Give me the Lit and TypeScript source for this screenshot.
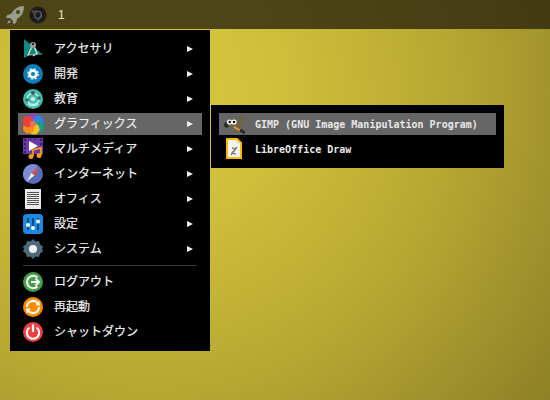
import { LitElement, html, css, svg } from "lit";
import { customElement } from "lit/decorators.js";

const icons: Record<string, unknown> = {
  acc: svg`<path d="M2 1 L12 9 L21 17 L9 16.500 L2 20 Z" fill="#0e8a7e"/><circle cx="11" cy="7" r="3" fill="#9a9a9a"/><rect x="10" y="5" width="2" height="2" fill="#222"/><path d="M9.500 9.500 L6 17 M12.500 9.500 L15 15.500 L11 18" stroke="#e2e2e2" stroke-width="1.300" fill="none"/><path d="M5 17 L15 16.500" stroke="#bbb" stroke-width="1"/>`,
  dev: svg`<circle cx="11" cy="11" r="10" fill="#0a7fb8"/><circle cx="11" cy="11" r="3.400" fill="none" stroke="#fff" stroke-width="2.600"/><circle cx="11" cy="11" r="5.200" fill="none" stroke="#fff" stroke-width="1.300" stroke-dasharray="2 2.100"/>`,
  edu: svg`<circle cx="11" cy="11" r="10" fill="#3dbfae"/><ellipse cx="11" cy="11" rx="6" ry="5.500" fill="none" stroke="#dff3f0" stroke-width="1.300"/><circle cx="11" cy="5" r="2" fill="#4a5a5a"/><circle cx="17" cy="10" r="1.700" fill="#4a5a5a"/><circle cx="5" cy="12" r="1.700" fill="#4a5a5a"/><circle cx="11" cy="11" r="2.300" fill="#bfe9e2"/><path d="M6 16 Q11 20 16 16" fill="none" stroke="#dff3f0" stroke-width="1.200"/>`,
  gfx: svg`<circle cx="11" cy="6.500" r="6" fill="#8e44c9"/><circle cx="16" cy="8" r="5.500" fill="#2f86e0"/><circle cx="16.500" cy="14" r="5.500" fill="#12a08a"/><circle cx="12" cy="16" r="5.500" fill="#f2c21e"/><circle cx="6.500" cy="15" r="5.500" fill="#f58a1f"/><circle cx="6" cy="8.500" r="5.500" fill="#ee4136"/><circle cx="11" cy="11" r="3" fill="#f07060"/>`,
  mm: svg`<rect x="1" y="0" width="20" height="16" fill="#6a3aa8"/><g fill="#3a1a70"><rect x="2" y="1" width="2" height="2"/><rect x="2" y="5" width="2" height="2"/><rect x="2" y="9" width="2" height="2"/><rect x="2" y="13" width="2" height="2"/><rect x="18" y="1" width="2" height="2"/><rect x="18" y="5" width="2" height="2"/><rect x="7" y="1" width="2" height="1"/><rect x="12" y="1" width="2" height="1"/></g><path d="M7 3 L16 8 L7 13Z" fill="#fff"/><path d="M11 18 V12 L19 10 V17" fill="none" stroke="#f59a14" stroke-width="1.800"/><circle cx="9" cy="18.500" r="2.500" fill="#f59a14"/><circle cx="17" cy="17.500" r="2.500" fill="#f59a14"/>`,
  net: svg`<circle cx="11" cy="11" r="10" fill="#5a6cb8"/><path d="M1 11A10 10 0 0 1 16 2.500 L6 19.500 A10 10 0 0 1 1 11Z" fill="#7d8ed0"/><path d="M17 4 L12.500 12.500 L9.500 10Z" fill="#e94b35"/><path d="M5 18 L9.500 10 L12.500 12.500Z" fill="#eee"/>`,
  off: svg`<rect x="3" y="1" width="16" height="20" fill="#eaeaea"/><g fill="#555"><rect x="5" y="4" width="12" height="1"/><rect x="5" y="6" width="12" height="1"/><rect x="5" y="8" width="12" height="1"/><rect x="5" y="10" width="12" height="1"/><rect x="5" y="12" width="12" height="1"/><rect x="5" y="14" width="12" height="1"/><rect x="5" y="16" width="12" height="1"/></g>`,
  set: svg`<rect x="1" y="1" width="20" height="20" rx="4" fill="#1e88e5"/><path d="M6 5V17M11 5V17M16 5V17" stroke="#0b3f70" stroke-width="1.600"/><circle cx="6" cy="12" r="2" fill="#fff"/><circle cx="11" cy="15" r="2" fill="#fff"/><circle cx="16" cy="8.500" r="2" fill="#fff"/>`,
  sys: svg`<path d="M11 1 L13.500 3.500 L17 3 L18 6.500 L21 8.500 L20 11 L21 13.500 L18 15.500 L17 19 L13.500 18.500 L11 21 L8.500 18.500 L5 19 L4 15.500 L1 13.500 L2 11 L1 8.500 L4 6.500 L5 3 L8.500 3.500Z" fill="#4f6b7a"/><circle cx="11" cy="11" r="4" fill="#f2f2f2"/>`,
  out: svg`<circle cx="11" cy="11" r="10" fill="#43a047"/><path d="M15.500 6.500A6.200 6.200 0 1 0 15.500 15.500" fill="none" stroke="#fff" stroke-width="2"/><path d="M9 11H17M13.500 7.500L17 11L13.500 14.500" fill="none" stroke="#fff" stroke-width="2"/>`,
  re: svg`<circle cx="11" cy="11" r="10" fill="#fb8c00"/><path d="M5 11A6 6 0 0 1 15.500 7" fill="none" stroke="#fff" stroke-width="2"/><path d="M17 11A6 6 0 0 1 6.500 15" fill="none" stroke="#fff" stroke-width="2"/><path d="M13.500 9.500L18 9.500L17 4.500Z M8.500 12.500L4 12.500L5 17.500Z" fill="#fff"/>`,
  pow: svg`<circle cx="11" cy="11" r="10" fill="#ef4040"/><path d="M7.500 6.500A6.200 6.200 0 1 0 14.500 6.500" fill="none" stroke="#fff" stroke-width="2"/><path d="M11 3.500V11" stroke="#fff" stroke-width="2.200"/>`,
  gimp: svg`<path d="M3 8 Q13 9 20 1 Q23 11 16 15 Q9 17 3 14Z" fill="#6e6349"/><ellipse cx="3.500" cy="12" rx="2.500" ry="2.800" fill="#2b2b2b"/><circle cx="6.500" cy="9" r="2.600" fill="#fff"/><circle cx="11" cy="9" r="2.600" fill="#fff"/><circle cx="6.800" cy="9" r="1.300" fill="#111"/><circle cx="11" cy="9" r="1.300" fill="#111"/><path d="M11 14 L18 18" stroke="#e0a020" stroke-width="1.800"/><path d="M17 17 L22 20" stroke="#2b2b2b" stroke-width="2.800"/>`,
  draw: svg`<path d="M4 1H14L18 5V20H4Z" fill="#f5f5f0" stroke="#fdb900" stroke-width="2"/><path d="M13.500 2V5.500H17" fill="#ddd"/><path d="M8 17 L14 9 M9 10 Q15 11 10 13.500 Q7 15 13 16" fill="none" stroke="#777" stroke-width="1.300"/>`,
};

const main: [string, string, boolean, boolean?][] = [
  ["acc", "アクセサリ", true],
  ["dev", "開発", true],
  ["edu", "教育", true],
  ["gfx", "グラフィックス", true, true],
  ["mm", "マルチメディア", true],
  ["net", "インターネット", true],
  ["off", "オフィス", true],
  ["set", "設定", true],
  ["sys", "システム", true],
];
const actions: [string, string, boolean][] = [
  ["out", "ログアウト", false],
  ["re", "再起動", false],
  ["pow", "シャットダウン", false],
];

@customElement("app-root")
export class AppRoot extends LitElement {
  static styles = css`
    :host {
      display: block;
      position: relative;
      width: 550px;
      height: 400px;
      overflow: hidden;
      background: radial-gradient(circle 620px at 150px 90px, #d9c83c 0%, #cfbe3a 22%, #b5a632 50%, #8f8227 80%, #7d7222 100%);
      font-family: "Noto Sans CJK JP", "Noto Sans", sans-serif;
      color: #eee;
      font-size: 12px;
    }
    .bar {
      height: 29px;
      display: flex;
      align-items: center;
      background: rgba(40, 34, 12, 0.78);
      color: #e8e4c8;
    }
    .rocket { margin-left: 5px; width: 20px; height: 20px; }
    .chrome { margin-left: 4px; width: 18px; height: 18px; }
    .num { margin-left: 11px; font-size: 12px; font-family: "Liberation Sans", sans-serif; }
    .menu {
      position: absolute;
      left: 10px;
      top: 30px;
      width: 184px;
      padding: 8px;
      background: #000;
      display: flex;
      flex-direction: column;
      gap: 3px;
    }
    .row {
      height: 22px;
      display: flex;
      align-items: center;
      padding-left: 4px;
      gap: 10px;
      position: relative;
    }
    .row.active { background: #666; }
    .row svg.ic { width: 22px; height: 22px; flex: none; }
    .label { flex: 1; white-space: nowrap; line-height: 20px; height: 22px; -webkit-text-stroke: 0.2px #eee; }
    .arrow {
      width: 0; height: 0;
      margin-right: 9px;
      border-left: 6px solid #eee;
      border-top: 3px solid transparent;
      border-bottom: 3px solid transparent;
    }
    .sep { height: 1px; background: #3c3c3c; margin: 2px 5px; }
    .sub {
      position: absolute;
      left: 211px;
      top: 105px;
      width: 277px;
      padding: 8px;
      background: #000;
      display: flex;
      flex-direction: column;
      gap: 3px;
      font-family: "DejaVu Sans Mono", monospace;
      font-size: 10px;
      font-weight: bold;
    }
    .sub .label { -webkit-text-stroke: 0; color: #e6e6e6; line-height: 24px; }
  `;

  private row(r: [string, string, boolean, boolean?]) {
    return html`<div class="row ${r[3] ? "active" : ""}">
      <svg class="ic" viewBox="0 0 22 22">${icons[r[0]]}</svg>
      <span class="label">${r[1]}</span>
      ${r[2] ? html`<span class="arrow"></span>` : ""}
    </div>`;
  }

  render() {
    return html`
      <div class="bar">
        <svg class="rocket" viewBox="0 0 20 20"><path fill-rule="evenodd" d="M19 1 C13 1 9 4 6 9 L2 10 L1 13 L5 13 L8 16 L8 19 L11 18 L12 14 C17 11 19 7 19 1Z M13 5 a2 2 0 1 0 .01 0Z M4 15 L2 19 L6 17Z" fill="#9a9c92"/></svg>
        <svg class="chrome" viewBox="0 0 18 18"><circle cx="9" cy="9" r="8.500" fill="#1c1c1c"/><circle cx="9" cy="9" r="3.500" fill="none" stroke="#666" stroke-width="1.200"/><path d="M3 5H9M12 9L9 15M6 9L3 5" stroke="#555" stroke-width="1.200"/></svg>
        <span class="num">1</span>
      </div>
      <div class="menu">
        ${main.map((r) => this.row(r))}
        <div class="sep"></div>
        ${actions.map((r) => this.row(r))}
      </div>
      <div class="sub">
        <div class="row active"><svg class="ic" viewBox="0 0 22 22">${icons.gimp}</svg><span class="label">GIMP (GNU Image Manipulation Program)</span></div>
        <div class="row"><svg class="ic" viewBox="0 0 22 22">${icons.draw}</svg><span class="label">LibreOffice Draw</span></div>
      </div>
    `;
  }
}
